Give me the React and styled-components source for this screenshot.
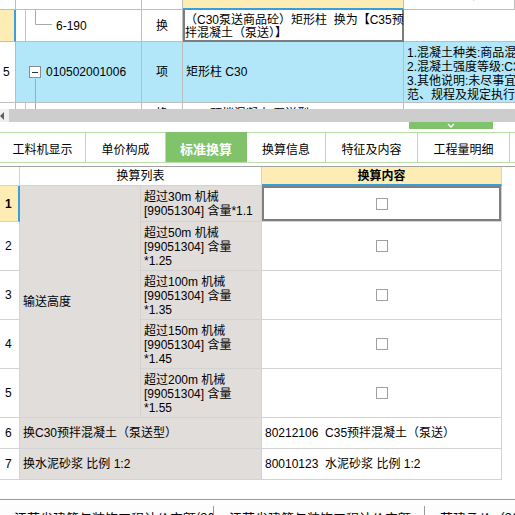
import React from 'react';
import styled, { createGlobalStyle } from 'styled-components';

const FONT = `"Liberation Sans", "Noto Sans CJK SC", sans-serif`;
const LINE = '#bdbdbd';
const ILINE = '#d3d3d3';
const BLUE = '#3a9fd6';
const YELLOW = '#fdedb5';
const HILITE = '#b2e7fa';
const GREEN = '#80c36b';
const LGREEN = '#b8dfa8';
const GRAYCELL = '#e1dddb';

const Global = createGlobalStyle`
  html, body { margin: 0; padding: 0; background: #fff; }
  body { width: 515px; height: 515px; overflow: hidden; font-family: ${FONT}; font-size: 12px; color: #000; }
  * { box-sizing: border-box; }
`;

const Page = styled.div`
  width: 515px;
  height: 515px;
  display: flex;
  flex-direction: column;
  overflow: hidden;
  background: #fff;
`;

/* ---------- top grid ---------- */
const TopViewport = styled.div`
  flex: none;
  height: 109px;
  overflow: hidden;
`;

const TopGrid = styled.div`
  display: grid;
  grid-template-columns: 16px 126px 41px 221px 111px;
  grid-template-rows: 30px 32px 61px 30px;
  margin-top: -20px;
`;

const TopCell = styled.div`
  position: relative;
  display: flex;
  align-items: center;
  background: ${p => p.$bg || '#fff'};
  border-right: 1px solid ${LINE};
  border-bottom: 1px solid ${LINE};
  line-height: 14px;
  white-space: nowrap;
  overflow: hidden;
`;

const HeadCell = styled(TopCell)`
  justify-content: center;
  padding-top: 1px;
  background: ${p => (p.$hl ? YELLOW : '#fff')};
  border-bottom: ${p => (p.$hl ? `2px solid ${BLUE}` : `1px solid ${LINE}`)};
`;

const RowNum = styled(TopCell)`
  padding-left: 3px;
  background: ${p => (p.$selected ? YELLOW : '#fff')};
  border-right: ${p => (p.$selected ? `2px solid ${BLUE}` : `1px solid ${LINE}`)};
`;

const CodeCell = styled(TopCell)`
  padding-left: ${p => p.$indent}px;
  gap: 5px;
`;

const KindCell = styled(TopCell)`
  justify-content: center;
  align-items: ${p => (p.$top ? 'flex-start' : 'center')};
  padding-top: ${p => (p.$top ? '4px' : '0')};
`;

const NameCell = styled(TopCell)`
  align-items: ${p => (p.$top ? 'flex-start' : 'center')};
  padding-top: ${p => (p.$top ? '4px' : '0')};
  padding-left: ${p => p.$indent || 3}px;
`;

const EditCell = styled(TopCell)`
  display: block;
  padding: 4px 2px 0;
  line-height: 13px;
  border: none;
  box-shadow: inset 2px 0 0 #7d7d7d, inset -2px 0 0 #7d7d7d, inset 0 -2px 0 #7d7d7d;
`;

const FeatureCell = styled(TopCell)`
  display: block;
  padding: 4px 0 0 3px;
  line-height: 14px;
  border-right: none;
`;

const TreeSvg = styled.svg`
  position: absolute;
  left: 0;
  top: 0;
  pointer-events: none;
`;

function TreeLines({ kind, h }) {
  return (
    <TreeSvg width="40" height={h} viewBox={`0 0 40 ${h}`}>
      {kind !== 'parent' && <line x1="9.5" y1="0" x2="9.5" y2={h} stroke="#c4c4c4" />}
      {kind === 'leaf' && (
        <>
          <line x1="19.5" y1="0" x2="19.5" y2="14.5" stroke="#a8a8a8" />
          <line x1="19.5" y1="14.5" x2="36" y2="14.5" stroke="#a8a8a8" />
        </>
      )}
      {kind === 'parent' && <line x1="19.5" y1="37" x2="19.5" y2={h} stroke="#a8a8a8" />}
      {kind === 'child' && <line x1="19.5" y1="0" x2="19.5" y2={h} stroke="#a8a8a8" />}
    </TreeSvg>
  );
}

const MinusBox = styled.span`
  position: relative;
  flex: none;
  width: 12px;
  height: 12px;
  border: 1px solid #8c8c8c;
  background: #fff;
  display: flex;
  align-items: center;
  justify-content: center;
  &::before {
    content: '';
    width: 6px;
    height: 1px;
    background: #333;
  }
`;

/* ---------- scrollbar + handle ---------- */
const HScroll = styled.div`
  flex: none;
  height: 13px;
  display: flex;
  background: #f0f0f0;
`;

const ScrollBtn = styled.div`
  flex: none;
  width: 9px;
  display: flex;
  align-items: center;
`;

const ScrollThumb = styled.div`
  flex: 1;
  background: #cdcdcd;
`;

const HandleStrip = styled.div`
  flex: none;
  height: 10px;
  display: flex;
  justify-content: flex-end;
  padding-right: 22px;
`;

const GreenHandle = styled.div`
  width: 84px;
  height: 7px;
  background: ${GREEN};
  display: flex;
  justify-content: center;
  align-items: center;
`;

/* ---------- tabs ---------- */
const TabBar = styled.div`
  flex: none;
  height: 31px;
  display: flex;
  border-bottom: 1px solid ${LGREEN};
`;

const Tab = styled.div`
  flex: none;
  width: ${p => p.$w}px;
  height: 30px;
  display: flex;
  align-items: center;
  justify-content: center;
  padding-top: 2px;
  border-top: 1px solid ${p => (p.$active ? GREEN : LGREEN)};
  border-right: 1px solid ${p => (p.$active ? GREEN : LGREEN)};
  background: ${p => (p.$active ? GREEN : '#fff')};
  color: ${p => (p.$active ? '#fff' : '#000')};
  font-family: "Noto Sans CJK SC", sans-serif;
  font-size: ${p => (p.$active ? 13 : 12)}px;
  font-weight: ${p => (p.$active ? 700 : 400)};
  white-space: nowrap;
`;

const TabGap = styled.div`
  flex: none;
  height: 3px;
`;

/* ---------- inner grid ---------- */
const InnerGrid = styled.div`
  flex: none;
  display: grid;
  grid-template-columns: 20px 121px 121px 240px 13px;
  grid-template-rows: 19px 36px 49px 49px 49px 49px 31px 31px;
  border-top: 1px solid #a0a0a0;
`;

const ICell = styled.div`
  display: flex;
  align-items: center;
  background: ${p => p.$bg || '#fff'};
  border-right: 1px solid ${ILINE};
  border-bottom: 1px solid ${ILINE};
  line-height: 14px;
  white-space: nowrap;
  overflow: hidden;
`;

const IHead = styled(ICell)`
  justify-content: center;
  background: ${p => (p.$hl ? YELLOW : '#fff')};
  font-weight: ${p => (p.$hl ? 700 : 400)};
  border-bottom: ${p => (p.$hl ? `2px solid ${BLUE}` : `1px solid ${ILINE}`)};
  padding-top: ${p => (p.$hl ? '1px' : '0')};
`;

const INum = styled(ICell)`
  padding-left: 5px;
  background: ${p => (p.$selected ? YELLOW : '#fff')};
  font-weight: ${p => (p.$selected ? 700 : 400)};
  border-right: ${p => (p.$selected ? `2px solid ${BLUE}` : `1px solid ${ILINE}`)};
`;

const GroupCell = styled(ICell)`
  background: ${GRAYCELL};
  padding-left: 3px;
`;

const OptionCell = styled(ICell)`
  display: block;
  background: ${GRAYCELL};
  padding: 4px 0 0 3px;
`;

const ValueCell = styled(ICell)`
  justify-content: ${p => (p.$text ? 'flex-start' : 'center')};
  padding-left: ${p => (p.$text ? '3px' : '0')};
  box-shadow: ${p =>
    p.$selected ? 'inset 0 0 0 2px #7f7f7f' : 'none'};
`;

const BlankCell = styled.div`
  background: #fff;
`;

const CheckBox = styled.span`
  width: 12px;
  height: 12px;
  border: 1px solid #a0a0a0;
  background: #fff;
`;

const Spacer = styled.div`
  flex: 1;
`;

/* ---------- status bar ---------- */
const StatusBar = styled.div`
  flex: none;
  height: 16px;
  display: flex;
  border-top: 1px solid #9a9a9a;
  background: #fdfdfd;
  font-family: "Noto Sans CJK SC", sans-serif;
  font-size: 13px;
  overflow: hidden;
`;

const StatusItem = styled.div`
  flex: none;
  width: ${p => p.$w}px;
  padding: 10px 0 0 ${p => p.$pl}px;
  line-height: 16px;
  white-space: nowrap;
  overflow: hidden;
`;

const StatusSep = styled.div`
  flex: none;
  width: 1px;
  margin-top: 6px;
  background: #9a9a9a;
`;

const options = [
  ['超过30m 机械', '[99051304] 含量*1.1'],
  ['超过50m 机械', '[99051304] 含量', '*1.25'],
  ['超过100m 机械', '[99051304] 含量', '*1.35'],
  ['超过150m 机械', '[99051304] 含量', '*1.45'],
  ['超过200m 机械', '[99051304] 含量', '*1.55'],
];

export default function App() {
  return (
    <>
      <Global />
      <Page>
        <TopViewport>
          <TopGrid>
            <HeadCell />
            <HeadCell>编码</HeadCell>
            <HeadCell>类别</HeadCell>
            <HeadCell $hl>名称</HeadCell>
            <HeadCell>项目特征</HeadCell>

            <RowNum $selected />
            <CodeCell $indent={40}>
              <TreeLines kind="leaf" h={32} />
              6-190
            </CodeCell>
            <KindCell>换</KindCell>
            <EditCell>
              （C30泵送商品砼）矩形柱&nbsp;&nbsp;换为【C35预
              <br />
              拌混凝土（泵送）】
            </EditCell>
            <FeatureCell />

            <RowNum>5</RowNum>
            <CodeCell $bg={HILITE} $indent={13}>
              <TreeLines kind="parent" h={61} />
              <MinusBox />
              010502001006
            </CodeCell>
            <KindCell $bg={HILITE}>项</KindCell>
            <NameCell $bg={HILITE}>矩形柱 C30</NameCell>
            <FeatureCell $bg={HILITE}>
              1.混凝土种类:商品混凝土
              <br />
              2.混凝土强度等级:C30
              <br />
              3.其他说明:未尽事宜详见图纸
              <br />
              范、规程及规定执行
            </FeatureCell>

            <RowNum />
            <CodeCell $indent={40}>
              <TreeLines kind="child" h={30} />
              6-190
            </CodeCell>
            <KindCell $top>换</KindCell>
            <NameCell $top $indent={27}>预拌混凝土 泵送型 C30</NameCell>
            <FeatureCell />
          </TopGrid>
        </TopViewport>

        <HScroll>
          <ScrollBtn>
            <svg width="5" height="8" viewBox="0 0 5 8">
              <polygon points="4,0 4,8 0,4" fill="#606060" />
            </svg>
          </ScrollBtn>
          <ScrollThumb />
        </HScroll>

        <HandleStrip>
          <GreenHandle>
            <svg width="8" height="6" viewBox="0 0 8 6">
              <polyline points="1,1 4,4 7,1" fill="none" stroke="#fff" strokeWidth="1.4" />
            </svg>
          </GreenHandle>
        </HandleStrip>

        <TabBar>
          <Tab $w={86}>工料机显示</Tab>
          <Tab $w={80}>单价构成</Tab>
          <Tab $w={81} $active>标准换算</Tab>
          <Tab $w={79}>换算信息</Tab>
          <Tab $w={92}>特征及内容</Tab>
          <Tab $w={92}>工程量明细</Tab>
          <Tab $w={40}>反</Tab>
        </TabBar>
        <TabGap />

        <InnerGrid>
          <IHead />
          <IHead style={{ gridColumn: '2 / 4' }}>换算列表</IHead>
          <IHead $hl>换算内容</IHead>
          <BlankCell />

          {options.map((lines, i) => (
            <React.Fragment key={i}>
              <INum $selected={i === 0} style={{ gridRow: i + 2 }}>{i + 1}</INum>
              {i === 0 && <GroupCell style={{ gridColumn: 2, gridRow: '2 / 7' }}>输送高度</GroupCell>}
              <OptionCell style={{ gridColumn: 3, gridRow: i + 2 }}>
                {lines.map((l, j) => (
                  <div key={j}>{l}</div>
                ))}
              </OptionCell>
              <ValueCell $selected={i === 0} style={{ gridColumn: 4, gridRow: i + 2 }}>
                <CheckBox />
              </ValueCell>
              <BlankCell style={{ gridColumn: 5, gridRow: i + 2 }} />
            </React.Fragment>
          ))}

          <INum>6</INum>
          <GroupCell style={{ gridColumn: '2 / 4' }}>换C30预拌混凝土（泵送型）</GroupCell>
          <ValueCell $text>80212106&nbsp;&nbsp;C35预拌混凝土（泵送）</ValueCell>
          <BlankCell />

          <INum>7</INum>
          <GroupCell style={{ gridColumn: '2 / 4' }}>换水泥砂浆 比例 1:2</GroupCell>
          <ValueCell $text>80010123&nbsp;&nbsp;水泥砂浆 比例 1:2</ValueCell>
          <BlankCell />
        </InnerGrid>

        <Spacer />

        <StatusBar>
          <StatusItem $w={213} $pl={14}>江苏省建筑与装饰工程计价定额(2014)</StatusItem>
          <StatusSep />
          <StatusItem $w={210} $pl={15}>江苏省建筑与装饰工程计价定额</StatusItem>
          <StatusSep />
          <StatusItem $w={90} $pl={15}>苏建函价（2016）154号</StatusItem>
        </StatusBar>
      </Page>
    </>
  );
}
